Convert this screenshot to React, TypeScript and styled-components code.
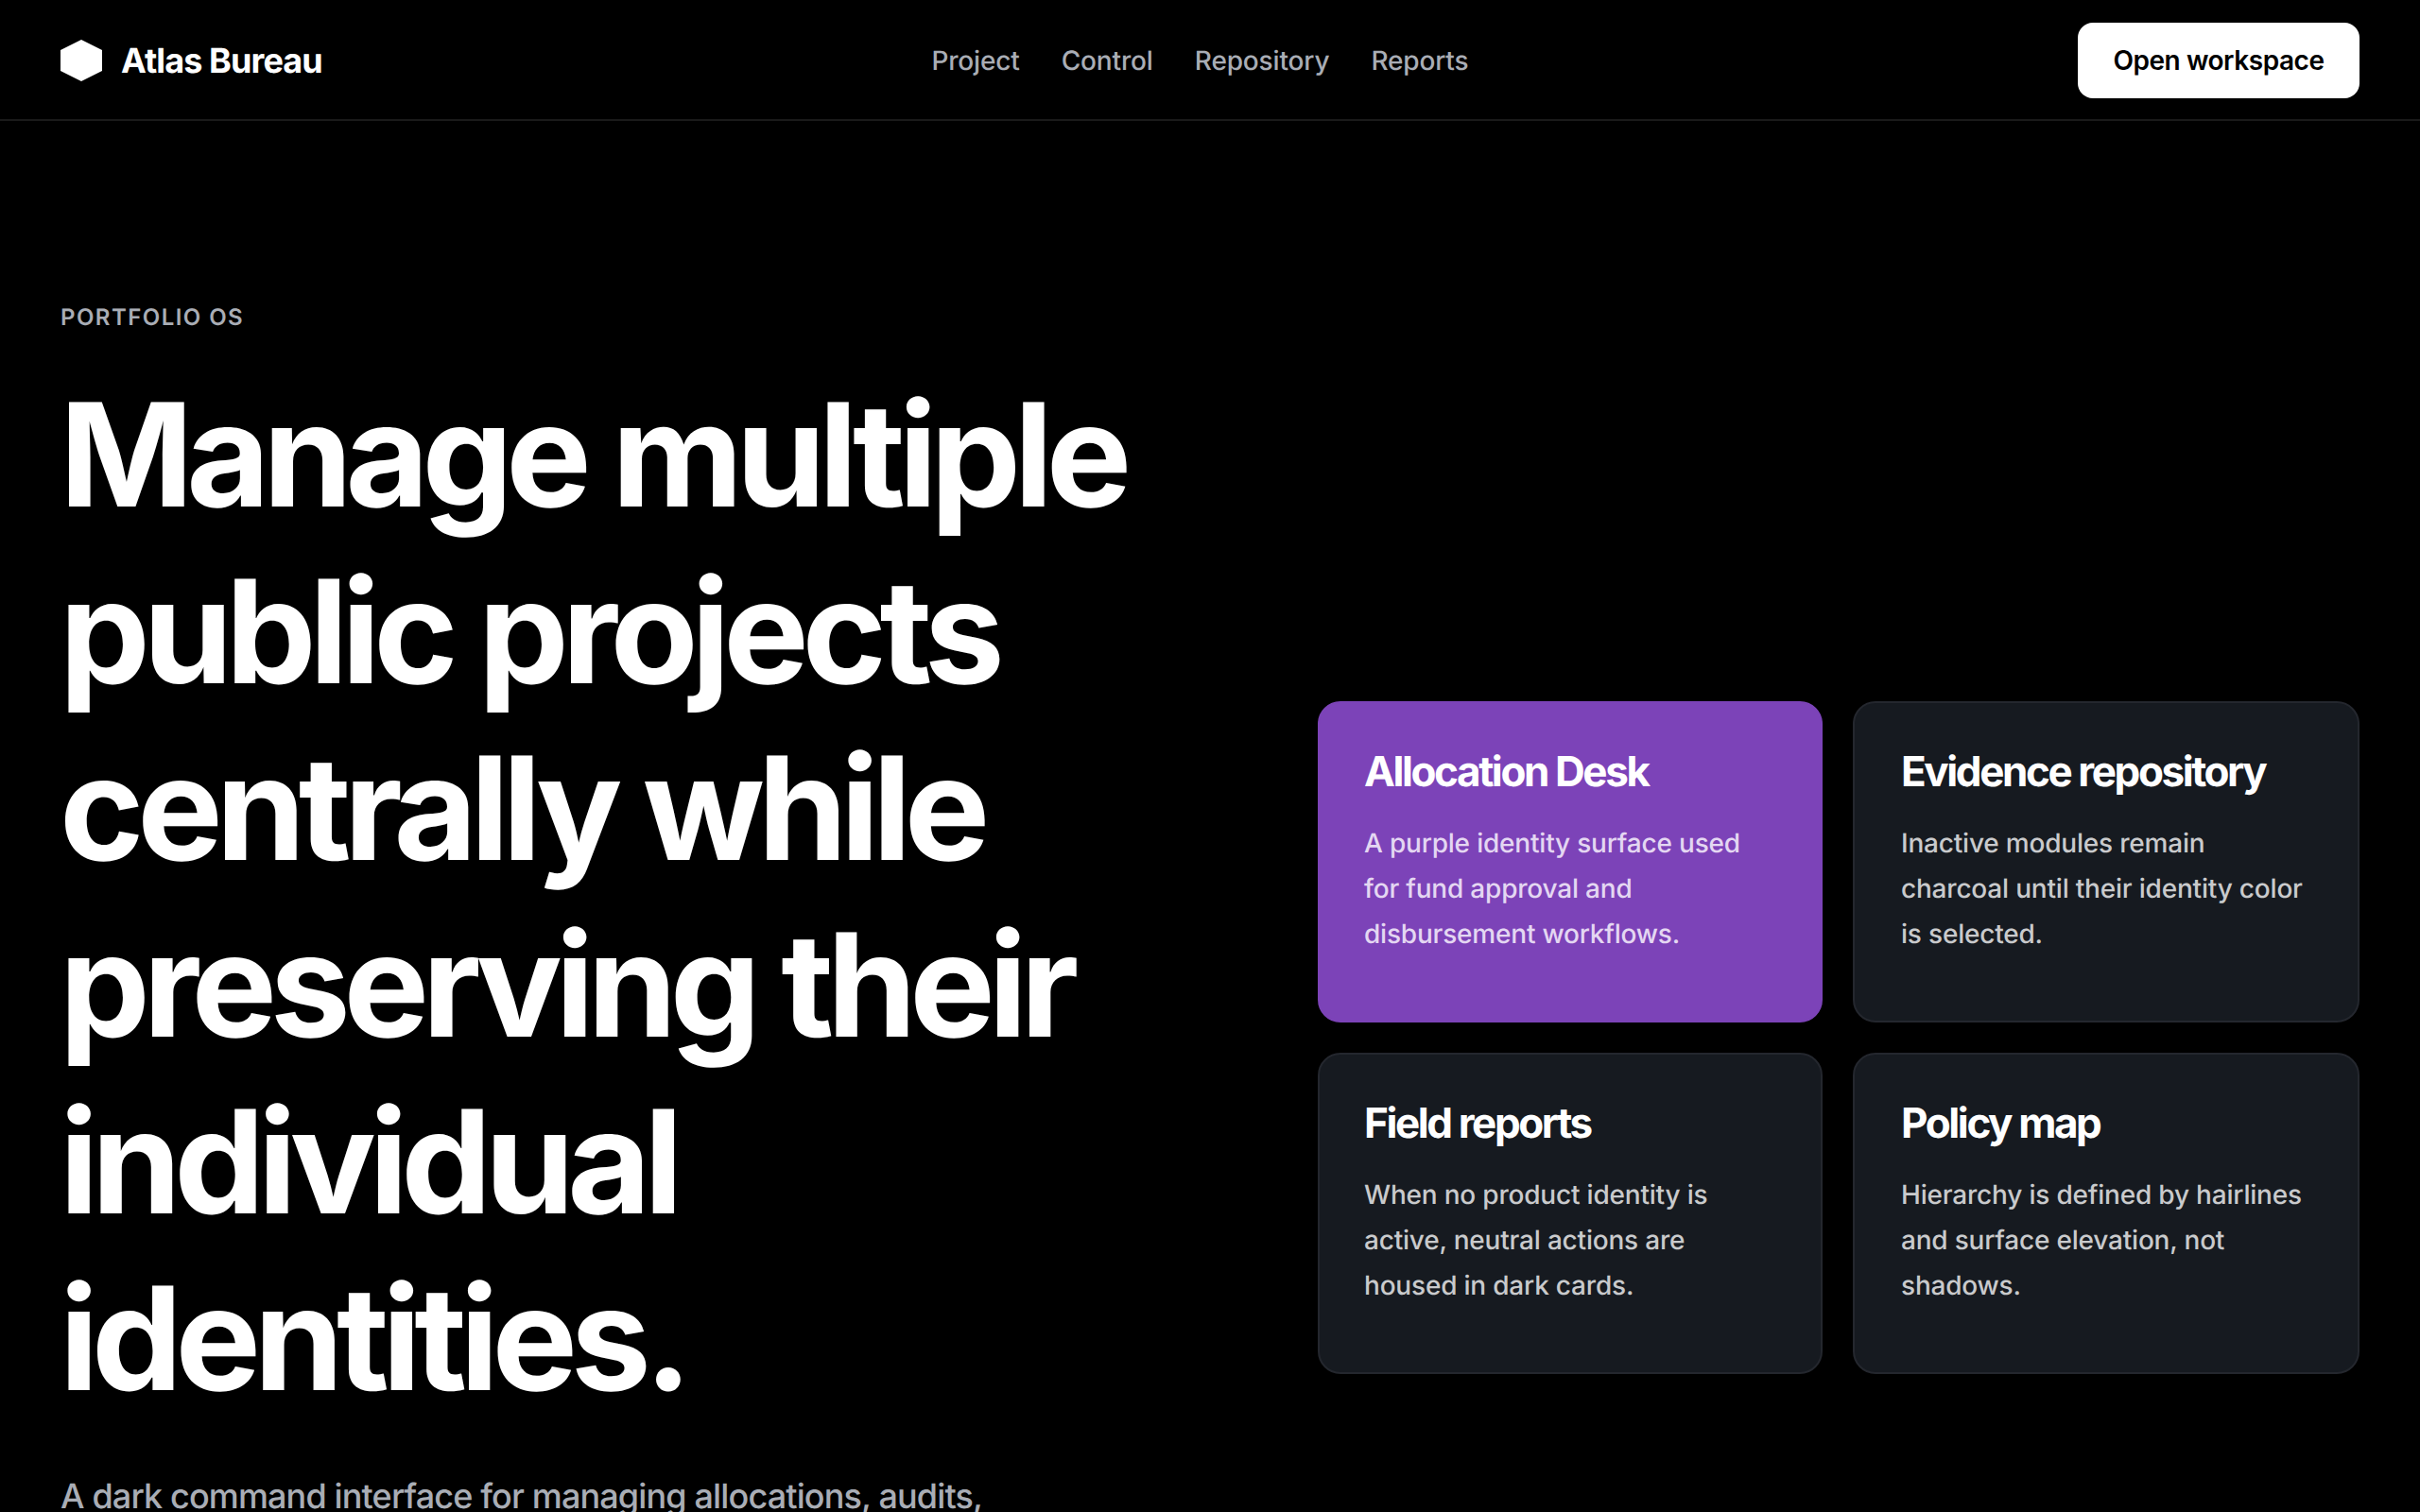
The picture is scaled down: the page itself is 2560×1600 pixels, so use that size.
import React from 'react'
import styled, { createGlobalStyle } from 'styled-components'

const GlobalStyle = createGlobalStyle`
  * {
    box-sizing: border-box;
  }

  html,
  body {
    margin: 0;
    background: #000;
  }

  body {
    font-family: Inter, 'Noto Sans', sans-serif;
    text-rendering: geometricPrecision;
    color: #fff;
  }
`

const Page = styled.div`
  height: 1600px;
  overflow: hidden;
  background: #000;
`

const Header = styled.header`
  height: 128px;
  padding: 2px 64px 0;
  display: flex;
  align-items: center;
  justify-content: space-between;
  border-bottom: 2px solid #1a1a1a;
`

const Brand = styled.div`
  display: flex;
  align-items: center;
  gap: 20px;
  font-size: 36px;
  font-weight: 650;
  letter-spacing: -0.9px;
`

const Nav = styled.nav`
  display: flex;
  gap: 44px;
`

const NavLink = styled.a`
  font-size: 28px;
  font-weight: 520;
  letter-spacing: -0.15px;
  color: #a9adb5;
`

const OpenButton = styled.button`
  width: 298px;
  height: 80px;
  border: 0;
  border-radius: 16px;
  background: #fff;
  color: #000;
  font-family: inherit;
  font-size: 28px;
  font-weight: 620;
  letter-spacing: -0.45px;
`

const Hero = styled.main`
  padding: 192px 64px 0;
  display: grid;
  grid-template-columns: 1fr 1102px;
  gap: 64px;
  align-items: start;
`

const Eyebrow = styled.div`
  margin-top: 2px;
  font-size: 24px;
  font-weight: 620;
  letter-spacing: 1.45px;
  line-height: 28px;
  color: #a9adb5;
`

const Title = styled.h1`
  margin: 38px 0 0 -1px;
  font-size: 152px;
  line-height: 187px;
  font-weight: 750;
  letter-spacing: -7.3px;
  color: #fff;
`

const Lead = styled.p`
  margin: 45px 0 0;
  font-size: 36px;
  line-height: 56px;
  font-weight: 450;
  letter-spacing: -0.86px;
  color: #a9adb5;
`

const CardGrid = styled.section`
  margin-top: 422px;
  display: grid;
  grid-template-columns: 534px 536px;
  gap: 32px;
`

const Card = styled.article<{ $active?: boolean }>`
  height: 340px;
  padding: 46px 48px 46px 47px;
  border-radius: 24px;
  border: 2px solid ${(p) => (p.$active ? '#7c43b8' : '#24272e')};
  background: ${(p) => (p.$active ? '#7c43b8' : '#161a20')};

  &:nth-child(even) {
    padding-left: 49px;
  }
`

const CardTitle = styled.h3`
  margin: 0;
  font-size: 44px;
  line-height: 52px;
  font-weight: 650;
  letter-spacing: -2.4px;
  color: #fff;
`

const CardText = styled.p<{ $active?: boolean }>`
  margin: 26px 0 0;
  font-size: 28px;
  line-height: 48px;
  font-weight: 450;
  letter-spacing: -0.2px;
  color: ${(p) => (p.$active ? '#e4d7f2' : '#c9cacc')};
`

const cards = [
  { title: 'Allocation Desk', text: 'A purple identity surface used for fund approval and disbursement workflows.', active: true },
  { title: 'Evidence repository', text: 'Inactive modules remain charcoal until their identity color is selected.' },
  { title: 'Field reports', text: 'When no product identity is active, neutral actions are housed in dark cards.' },
  { title: 'Policy map', text: 'Hierarchy is defined by hairlines and surface elevation, not shadows.' },
]

export default function App() {
  return (
    <Page>
      <GlobalStyle />
      <Header>
        <Brand>
          <svg width="44" height="44" viewBox="0 0 44 44" aria-hidden>
            <polygon points="22,0 44,11 44,33 22,44 0,33 0,11" fill="#fff" />
          </svg>
          Atlas Bureau
        </Brand>
        <Nav>
          <NavLink>Project</NavLink>
          <NavLink>Control</NavLink>
          <NavLink>Repository</NavLink>
          <NavLink>Reports</NavLink>
        </Nav>
        <OpenButton>Open workspace</OpenButton>
      </Header>
      <Hero>
        <div>
          <Eyebrow>PORTFOLIO OS</Eyebrow>
          <Title>
            Manage multiple public projects centrally while preserving their individual identities.
          </Title>
          <Lead>A dark command interface for managing allocations, audits,</Lead>
        </div>
        <CardGrid>
          {cards.map((c) => (
            <Card key={c.title} $active={c.active}>
              <CardTitle>{c.title}</CardTitle>
              <CardText $active={c.active}>{c.text}</CardText>
            </Card>
          ))}
        </CardGrid>
      </Hero>
    </Page>
  )
}
